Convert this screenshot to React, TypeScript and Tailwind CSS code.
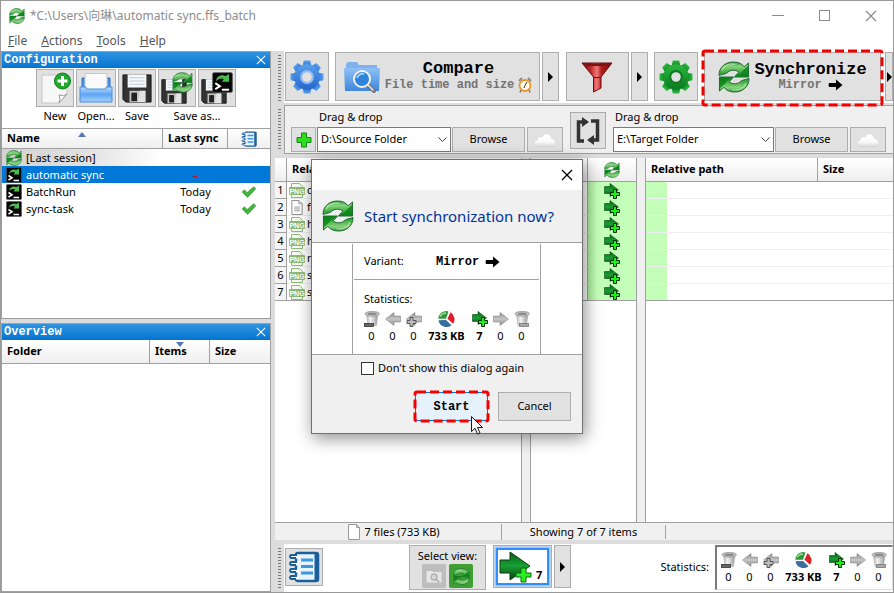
import { useState, type ReactNode } from 'react';
import clsx from 'clsx';

/* ---------- icons ---------- */

function Gradients() {
  return (
    <svg className="absolute size-0" aria-hidden="true">
      <defs>
        <linearGradient id="leaf" x1="0" y1="0" x2="0" y2="1">
          <stop offset="0" stopColor="#3c9c48" />
          <stop offset="0.3" stopColor="#86d37c" />
          <stop offset="1" stopColor="#0b8f1c" />
        </linearGradient>
        <linearGradient id="forest" x1="0" y1="0" x2="0" y2="1">
          <stop offset="0" stopColor="#0a5f16" />
          <stop offset="0.5" stopColor="#17a034" />
          <stop offset="1" stopColor="#063f0f" />
        </linearGradient>
        <linearGradient id="steel" x1="0" y1="0" x2="0" y2="1">
          <stop offset="0" stopColor="#8e8e8e" />
          <stop offset="0.5" stopColor="#c6c6c6" />
          <stop offset="1" stopColor="#8a8a8a" />
        </linearGradient>
        <linearGradient id="bin" x1="0" y1="0" x2="1" y2="0">
          <stop offset="0" stopColor="#b5b5b5" />
          <stop offset="0.35" stopColor="#f2f2f2" />
          <stop offset="1" stopColor="#9a9a9a" />
        </linearGradient>
        <linearGradient id="gearBlue" x1="0" y1="0" x2="0" y2="1">
          <stop offset="0" stopColor="#5aa0ee" />
          <stop offset="1" stopColor="#2467cc" />
        </linearGradient>
        <linearGradient id="gearGreen" x1="0" y1="0" x2="0" y2="1">
          <stop offset="0" stopColor="#2bb83e" />
          <stop offset="1" stopColor="#087a20" />
        </linearGradient>
        <linearGradient id="folder" x1="0" y1="0" x2="0" y2="1">
          <stop offset="0" stopColor="#8fc1f5" />
          <stop offset="1" stopColor="#3f86dd" />
        </linearGradient>
        <linearGradient id="tray" x1="0" y1="0" x2="0" y2="1">
          <stop offset="0" stopColor="#b9dcff" />
          <stop offset="0.5" stopColor="#5fa6f2" />
          <stop offset="1" stopColor="#a5d0fb" />
        </linearGradient>
        <linearGradient id="ruby" x1="0" y1="0" x2="1" y2="0">
          <stop offset="0" stopColor="#6a0b0b" />
          <stop offset="0.3" stopColor="#c22a2a" />
          <stop offset="0.5" stopColor="#f07878" />
          <stop offset="0.65" stopColor="#b01c1c" />
          <stop offset="1" stopColor="#7a0c0c" />
        </linearGradient>
        <linearGradient id="cloud" x1="0" y1="0" x2="0" y2="1">
          <stop offset="0" stopColor="#ffffff" />
          <stop offset="0.6" stopColor="#fafafa" />
          <stop offset="1" stopColor="#d8d8d8" />
        </linearGradient>
      </defs>
    </svg>
  );
}

const SWIRL =
  'M1 15C1 6 8 1 16 1C21 1 25 3 27 6L31.5 2V16.5H17L21.5 11.5C18 8.5 12 9 9 12.5C6.5 14 3 14 1 15Z';

function SyncIcon({ className }: { className?: string }) {
  return (
    <svg viewBox="0 0 33 33" className={className} aria-hidden="true">
      {[0, 180].map((deg) => (
        <g key={deg} transform={`rotate(${deg} 16.5 16.5)`}>
          <path d={SWIRL} fill="url(#leaf)" stroke="#1d6630" strokeWidth="1" />
          <path d="M18 16L31 16V5L26 9.500C24 12 22 14 18 16Z" fill="#078016" opacity="0.8" />
          <path d="M4 10C7 4 13 2.500 18 3.500" fill="none" stroke="#b6ecac" strokeWidth="1.500" opacity="0.7" />
        </g>
      ))}
    </svg>
  );
}

function BatchIcon({ className }: { className?: string }) {
  return (
    <svg viewBox="0 0 16 16" className={className} aria-hidden="true">
      <rect x="0.500" y="0.500" width="15" height="15" rx="1" fill="#050505" stroke="#555" strokeWidth="0.600" />
      <path d="M3 7C3.500 3 7 1.500 10.500 3L13 1.500V7.500H7.500L9 5.500C7 4.500 5 5 3 7Z" fill="#4cbb4e" />
      <path d="M2.500 8.500L6 10.800L2.500 13" fill="none" stroke="#fff" strokeWidth="1.500" />
      <path d="M7.500 13.500H13" stroke="#fff" strokeWidth="1.500" />
    </svg>
  );
}

function GearIcon({ fill, hole, className }: { fill: string; hole: string; className?: string }) {
  return (
    <svg viewBox="0 0 32 32" className={className} aria-hidden="true">
      <g fill={fill}>
        {[0, 45, 90, 135, 180, 225, 270, 315].map((deg) => (
          <path key={deg} d="M11.500 7L13 0.500H19L20.500 7Z" transform={`rotate(${deg} 16 16)`} />
        ))}
        <circle cx="16" cy="16" r="12" />
      </g>
      <circle cx="16" cy="16" r="5.500" fill="#e1e1e1" stroke={hole} strokeWidth="2" />
    </svg>
  );
}

function ArrowPlusIcon({ className }: { className?: string }) {
  return (
    <svg viewBox="0 0 16 16" className={className} aria-hidden="true">
      <path d="M0.500 3.500H6V0.500L14.500 7L6 13.500V10.500H0.500Z" fill="url(#forest)" stroke="#0a4a12" strokeWidth="0.600" />
      <path
        d="M9.500 6.500H12.500V9.500H15.500V12.500H12.500V15.500H9.500V12.500H6.500V9.500H9.500Z"
        fill="#1cf01c"
        stroke="#052b05"
      />
    </svg>
  );
}

function GrayArrowIcon({ left, plus, className }: { left?: boolean; plus?: boolean; className?: string }) {
  return (
    <svg viewBox="0 0 16 16" className={className} aria-hidden="true">
      <path
        d="M0.500 5H7V1.500L15.500 8L7 14.500V11H0.500Z"
        fill="url(#steel)"
        stroke="#8a8a8a"
        strokeWidth="0.600"
        transform={left ? 'rotate(180 8 8)' : undefined}
      />
      {plus && (
        <path d="M4 6.500H7V9.500H10V12.500H7V15.500H4V12.500H1V9.500H4Z" fill="#bdbdbd" stroke="#555" />
      )}
    </svg>
  );
}

function BinIcon({ right, className }: { right?: boolean; className?: string }) {
  return (
    <svg viewBox="0 0 16 16" className={className} aria-hidden="true">
      <path d="M2.500 3L4 14.500H12.500L14 3Z" fill="url(#bin)" stroke="#a8a8a8" strokeWidth="0.500" />
      <ellipse cx="8.200" cy="2.800" rx="7.200" ry="2.400" fill="#c9c9c9" stroke="#8a8a8a" strokeWidth="0.700" />
      <ellipse cx="8.200" cy="2.800" rx="4.800" ry="1.200" fill="#8b8b8b" />
      <rect x={right ? 5.5 : 0.5} y="12.500" width="9" height="3" fill={right ? '#a8a8a8' : '#666'} stroke={right ? '#777' : '#333'} strokeWidth="0.800" />
    </svg>
  );
}

function PieIcon({ className }: { className?: string }) {
  return (
    <svg viewBox="0 0 17 16" className={className} aria-hidden="true">
      <path d="M8 7.800L0.300 7.800A8 8 0 0 1 10.500 0.400Z" fill="#2f9a38" />
      <path d="M9.500 7.800L12.500 1.200A8 8 0 0 1 15 12.800Z" fill="#dd1f2a" />
      <path d="M8 9L0.500 9.200A8 8 0 0 0 13.500 14.200Z" fill="#3a6c9e" />
      <path d="M2 5.500Q4 2 8 2" stroke="#a6dba0" strokeWidth="1.500" fill="none" />
    </svg>
  );
}

function BlackArrowIcon({ className }: { className?: string }) {
  return (
    <svg viewBox="0 0 15 12" className={className} aria-hidden="true">
      <path d="M1 4H8V0.500L14.500 6L8 11.500V8H1Q0 6 1 4Z" fill="#000" />
    </svg>
  );
}

function NotebookIcon({ className }: { className?: string }) {
  return (
    <svg viewBox="0 0 32 32" className={className} aria-hidden="true">
      <rect x="8" y="2" width="22" height="28" rx="2" fill="#e9f3fb" stroke="#1b5f9e" strokeWidth="2.500" />
      <path d="M28.500 2V30" stroke="#1b5f9e" strokeWidth="4" />
      <path d="M13 9H25M13 15.500H25M13 22H25" stroke="#3d97dd" strokeWidth="3" />
      {[5, 12, 19, 26].map((y) => (
        <g key={y}>
          <rect x="2" y={y - 1.5} width="9" height="4" rx="2" fill="#fff" />
          <path d={`M9 ${y - 1}H3Q1 ${y + 0.5} 3 ${y + 2}H8`} fill="none" stroke="#1b5f9e" strokeWidth="2" />
        </g>
      ))}
    </svg>
  );
}

function FloppyIcon({ className }: { className?: string }) {
  return (
    <svg viewBox="0 0 32 32" className={className} aria-hidden="true">
      <path d="M1 2H31V31H4L1 28Z" fill="#333" stroke="#111" />
      <rect x="6" y="1.500" width="20" height="14" fill="#f4f8fb" />
      <path d="M8 5H24M8 8.500H24M8 12H24" stroke="#b8cbd8" />
      <rect x="8" y="19" width="17" height="12" fill="#c4c4c4" />
      <rect x="10" y="21" width="6" height="9" fill="#222" />
      <path d="M19 19H25V31H17Z" fill="#e3e3e3" />
    </svg>
  );
}

function NewFileIcon({ className }: { className?: string }) {
  return (
    <svg viewBox="0 0 32 32" className={className} aria-hidden="true">
      <path d="M3 3H28V22L20 31H3Z" fill="#f7f7f7" stroke="#c4c4c4" />
      <path d="M20 31Q22 26 20 23Q25 25 28 22Z" fill="#fff" stroke="#999" />
      <circle cx="23.500" cy="9" r="8" fill="#1fa82c" stroke="#11801c" />
      <path d="M23.500 4V14M18.500 9H28.500" stroke="#fff" strokeWidth="3" />
    </svg>
  );
}

function OpenIcon({ className }: { className?: string }) {
  return (
    <svg viewBox="0 0 34 32" className={className} aria-hidden="true">
      <path d="M3 6H31V18H3Z" fill="#4b94e6" stroke="#2f72c4" />
      <path d="M6 1.500H28V18H6Z" fill="#fafafa" stroke="#c9c9c9" />
      <path d="M1 15H7V17H27V15H33V30H1Z" fill="url(#tray)" stroke="#4c8fdc" />
    </svg>
  );
}

function FunnelIcon({ className }: { className?: string }) {
  return (
    <svg viewBox="0 0 32 32" className={className} aria-hidden="true">
      <path d="M1 2H31L20 16V27L12.500 31V16Z" fill="url(#ruby)" stroke="#6e0b0b" />
      <path d="M3 2.500H29L26 5H6Z" fill="#7d1212" />
      <path d="M12.500 16.500H20" stroke="#7a0d0d" />
    </svg>
  );
}

function FolderSearchIcon({ className }: { className?: string }) {
  return (
    <svg viewBox="0 0 38 32" className={className} aria-hidden="true">
      <path d="M3 5Q3 1 6 1H14L16 4H34V10H3Z" fill="#7db2ef" />
      <path d="M1 7H37L36 30H2Z" fill="url(#folder)" />
      <path d="M25 24L31 30" stroke="#777" strokeWidth="4" strokeLinecap="round" />
      <path d="M25 24L30.500 29.500" stroke="#e8e8e8" strokeWidth="1.500" />
      <circle cx="19" cy="18" r="8" fill="#2d84d8" stroke="#f2f2f2" strokeWidth="2" />
      <path d="M14 17Q16 12 21 13" stroke="#9fd0fa" strokeWidth="2" fill="none" />
    </svg>
  );
}

function ClockIcon({ className }: { className?: string }) {
  return (
    <svg viewBox="0 0 14 16" className={className} aria-hidden="true">
      <path d="M1 4L4 1M13 4L10 1" stroke="#8a8a8a" strokeWidth="2" />
      <path d="M3 13L2 15.500M11 13L12 15.500" stroke="#777" strokeWidth="1.500" />
      <circle cx="7" cy="8.500" r="5.500" fill="#fffbe6" stroke="#e9962c" strokeWidth="1.800" />
      <path d="M7 8.500L9 5M7 8.500L6 11" stroke="#333" fill="none" />
    </svg>
  );
}

function CloudIcon({ className }: { className?: string }) {
  return (
    <svg viewBox="0 0 24 16" className={className} aria-hidden="true">
      <path
        d="M5 15C0 15 0 9 4 8.500C4 5 7 4 9 5C11 0 18 1 18.500 6.500C23 6.500 24.500 14 19.500 15Z"
        fill="url(#cloud)"
        stroke="#d0d0d0"
        strokeWidth="0.500"
      />
    </svg>
  );
}

function SwapIcon({ className }: { className?: string }) {
  return (
    <svg viewBox="0 0 24 28" className={className} aria-hidden="true">
      <g fill="none" stroke="#333" strokeWidth="3.500">
        <path d="M8 24H2.500V5H8" />
        <path d="M15 4H21.500V23H17" />
      </g>
      <path d="M6 0L13 5L6 10ZM18 18V28L11 23Z" fill="#333" />
    </svg>
  );
}

function PlusIcon({ className }: { className?: string }) {
  return (
    <svg viewBox="0 0 16 16" className={className} aria-hidden="true">
      <path d="M5.500 1H10.500V5.500H15V10.500H10.500V15H5.500V10.500H1V5.500H5.500Z" fill="#2fdc1e" stroke="#128a14" />
    </svg>
  );
}

function CheckIcon() {
  return (
    <svg viewBox="0 0 16 13" className="mx-auto h-3 w-4" aria-hidden="true">
      <path d="M0.500 6.500L3 4L6 7L13 0.800L15.500 3L6.500 12.500Z" fill="#41b53b" stroke="#3b8f3a" strokeWidth="0.600" />
    </svg>
  );
}

function PngIcon() {
  return (
    <svg viewBox="0 0 16 15" className="h-[15px] w-4" aria-hidden="true">
      <path d="M2.500 0.500H10.500L13.500 3.500V14.500H2.500Z" fill="#f6faf3" stroke="#8dba78" />
      <rect x="0" y="4" width="16" height="8" rx="1" fill="#8dba78" />
      <text x="8" y="10.500" fontSize="7" fontWeight="700" fill="#fff" textAnchor="middle" fontFamily="Liberation Sans, sans-serif">
        PNG
      </text>
    </svg>
  );
}

function TextFileIcon() {
  return (
    <svg viewBox="0 0 16 16" className="h-[15px] w-4" aria-hidden="true">
      <path d="M2.500 0.500H10L13.500 4V15.500H2.500Z" fill="#fff" stroke="#888" />
      <path d="M10 0.500V4H13.500M5 7.500H11M5 9.500H11M5 11.500H11" fill="none" stroke="#999" />
    </svg>
  );
}

function CloseGlyph({ className }: { className?: string }) {
  return (
    <svg viewBox="0 0 12 12" className={className} aria-hidden="true">
      <path d="M1 1L11 11M11 1L1 11" fill="none" stroke="currentColor" strokeWidth="1.300" />
    </svg>
  );
}

function Dashes() {
  return (
    <svg className="pointer-events-none absolute inset-0 size-full overflow-visible" aria-hidden="true">
      <rect width="100%" height="100%" rx="2" fill="none" stroke="#f50000" strokeWidth="3" strokeDasharray="9 4" />
    </svg>
  );
}

/* ---------- small pieces ---------- */

const MONO = "font-['Liberation_Mono',monospace]";

function ToolButton({ label, className, children }: { label?: string; className?: string; children: ReactNode }) {
  return (
    <button
      type="button"
      aria-label={label}
      className={clsx('flex shrink-0 items-center justify-center border border-[#adadad] bg-[#e1e1e1]', className)}
    >
      {children}
    </button>
  );
}

function DropButton({ className }: { className: string }) {
  return (
    <ToolButton label="More" className={className}>
      <svg viewBox="0 0 5 10" className="h-2.5 w-[5px]" aria-hidden="true">
        <path d="M0 0L5 5L0 10Z" />
      </svg>
    </ToolButton>
  );
}

function Grip() {
  return (
    <div className="flex w-[13px] shrink-0 justify-end py-1 pr-[3px]">
      <div className="w-[3px] bg-[repeating-linear-gradient(#777_0_1px,transparent_1px_3px)]" />
    </div>
  );
}

function PanelTitle({ children }: { children: string }) {
  return (
    <div className="flex h-4 shrink-0 items-center justify-between bg-linear-to-b from-[#2f93e0] to-[#0074d1] pr-1 pl-0.5 text-white">
      <h2 className={clsx(MONO, 'text-xs leading-4 font-bold')}>{children}</h2>
      <button type="button" aria-label={`Close ${children}`}>
        <CloseGlyph className="size-2.5" />
      </button>
    </div>
  );
}

function Statistics() {
  const cells: { icon: ReactNode; value: string; bold?: boolean }[] = [
    { icon: <BinIcon className="size-4" />, value: '0' },
    { icon: <GrayArrowIcon left className="size-4" />, value: '0' },
    { icon: <GrayArrowIcon left plus className="size-4" />, value: '0' },
    { icon: <PieIcon className="h-4 w-[17px]" />, value: '733 KB', bold: true },
    { icon: <ArrowPlusIcon className="size-4" />, value: '7', bold: true },
    { icon: <GrayArrowIcon className="size-4" />, value: '0' },
    { icon: <BinIcon right className="size-4" />, value: '0' },
  ];
  return (
    <div className="grid grid-cols-[21px_21px_21px_45px_21px_21px_21px] justify-center">
      {cells.map((cell, i) => (
        <div key={i} className="flex flex-col items-center gap-px">
          {cell.icon}
          <span className={clsx('leading-4 whitespace-nowrap', cell.bold && 'font-bold')}>{cell.value}</span>
        </div>
      ))}
    </div>
  );
}

function FolderPicker({ id, path, className }: { id: string; path: string; className: string }) {
  return (
    <div className={clsx('flex flex-col gap-0.5', className)}>
      <label htmlFor={id} className="pl-0.5 leading-4">
        Drag &amp; drop
      </label>
      <div className="relative">
        <select
          id={id}
          defaultValue={path}
          className="block h-[25px] w-full appearance-none border border-[#7a7a7a] bg-white px-[3px] text-[11px]"
        >
          <option>{path}</option>
        </select>
        <svg viewBox="0 0 9 6" className="pointer-events-none absolute top-2.5 right-1 h-1.5 w-[9px]" aria-hidden="true">
          <path d="M0.500 0.500L4.500 4.500L8.500 0.500" fill="none" stroke="#444" />
        </svg>
      </div>
    </div>
  );
}

/* ---------- left column ---------- */

const SESSIONS = [
  { name: 'automatic sync', sync: '–', done: false },
  { name: 'BatchRun', sync: 'Today', done: true },
  { name: 'sync-task', sync: 'Today', done: true },
];

const HEAD = 'bg-linear-to-b from-white to-[#efefef] border-b border-[#a0a0a0] text-left font-bold';

function ConfigToolButton({ label, className, children }: { label: string; className: string; children: ReactNode }) {
  return (
    <ToolButton label={label} className={clsx('h-[38px]', className)}>
      {children}
    </ToolButton>
  );
}

function Configuration() {
  return (
    <section className="flex h-[268px] shrink-0 flex-col border border-[#a0a0a0] bg-white">
      <PanelTitle>Configuration</PanelTitle>
      <div className="flex h-[61px] shrink-0 justify-center gap-0.5 border-b border-[#a0a0a0] pt-px text-center leading-[18px]">
        <div>
          <ConfigToolButton label="New" className="w-[38px]">
            <NewFileIcon className="size-8" />
          </ConfigToolButton>
          New
        </div>
        <div>
          <ConfigToolButton label="Open" className="w-10">
            <OpenIcon className="h-8 w-[34px]" />
          </ConfigToolButton>
          Open...
        </div>
        <div>
          <ConfigToolButton label="Save" className="w-[38px]">
            <FloppyIcon className="size-[30px]" />
          </ConfigToolButton>
          Save
        </div>
        <div>
          <div className="flex gap-0.5">
            <ConfigToolButton label="Save as synchronization" className="relative w-[38px]">
              <FloppyIcon className="mt-1.5 mr-1.5 size-[26px]" />
              <SyncIcon className="absolute top-0.5 right-0.5 size-[21px]" />
            </ConfigToolButton>
            <ConfigToolButton label="Save as batch job" className="relative w-[38px]">
              <FloppyIcon className="mt-1.5 mr-1.5 size-[26px]" />
              <BatchIcon className="absolute top-0.5 right-0.5 size-[21px]" />
            </ConfigToolButton>
          </div>
          Save as...
        </div>
      </div>
      <table className="w-full table-fixed border-separate border-spacing-0">
        <colgroup>
          <col />
          <col className="w-[65px]" />
          <col className="w-[42px]" />
        </colgroup>
        <thead>
          <tr className="h-5">
            <th className={clsx(HEAD, 'relative border-r p-0 pl-[5px]')}>
              Name
              <span className="absolute top-[3px] left-1/2 -ml-1 size-0 border-x-4 border-b-[5px] border-x-transparent border-b-[#5277b8]" />
            </th>
            <th className={clsx(HEAD, 'border-r p-0 pl-[5px]')}>Last sync</th>
            <th aria-label="Log" className={clsx(HEAD, 'p-0')}>
              <NotebookIcon className="mx-auto size-4" />
            </th>
          </tr>
        </thead>
        <tbody>
          <tr className="h-[17px]">
            <td colSpan={3} className="bg-linear-to-r from-[#d2d2d2] via-[#e0e0e0] via-30% to-white to-60% p-0">
              <div className="flex items-center gap-1 pl-1 leading-4">
                <SyncIcon className="size-4" />
                [Last session]
              </div>
            </td>
          </tr>
          {SESSIONS.map((row, i) => (
            <tr key={row.name} className={clsx('h-[17px]', i === 0 && 'bg-[#0078d7] text-white')}>
              <td className="p-0">
                <div className="flex items-center gap-1 pl-1 leading-4">
                  <BatchIcon className="size-4" />
                  {row.name}
                </div>
              </td>
              <td className={clsx('p-0 text-center leading-4', !row.done && 'text-red-600')}>{row.sync}</td>
              <td className="p-0">{row.done && <CheckIcon />}</td>
            </tr>
          ))}
        </tbody>
      </table>
    </section>
  );
}

function Overview() {
  return (
    <section className="flex min-h-0 flex-1 flex-col border border-[#a0a0a0] bg-white">
      <PanelTitle>Overview</PanelTitle>
      <table className="w-full table-fixed border-separate border-spacing-0">
        <thead>
          <tr className="h-6">
            <th className={clsx(HEAD, 'border-r pl-[5px]')}>Folder</th>
            <th className={clsx(HEAD, 'relative w-[60px] border-r pl-[5px]')}>
              Items
              <span className="absolute top-0.5 left-1/2 -ml-1 size-0 border-x-4 border-t-[5px] border-x-transparent border-t-[#5277b8]" />
            </th>
            <th className={clsx(HEAD, 'w-[60px] pl-[5px]')}>Size</th>
          </tr>
        </thead>
      </table>
    </section>
  );
}

/* ---------- right column ---------- */

function MainToolbar() {
  return (
    <div className="flex h-[54px] shrink-0">
      <Grip />
      <div className="flex h-[52px] min-w-0 flex-1 justify-between bg-white pt-px pl-px">
        <div className="flex gap-1.5">
          <ToolButton label="Comparison settings" className="h-[49px] w-11">
            <GearIcon fill="url(#gearBlue)" hole="#8fbdf0" className="size-[34px]" />
          </ToolButton>
          <div className="flex gap-0.5">
            <ToolButton className="h-[49px] w-[205px] gap-1">
              <FolderSearchIcon className="h-8 w-[38px]" />
              <span className="flex flex-col items-center">
                <span className={clsx(MONO, 'text-[17px] leading-[17px] font-bold')}>Compare</span>
                <span className={clsx(MONO, 'flex items-center gap-1 text-xs leading-4 font-bold whitespace-nowrap text-[#737373]')}>
                  File time and size
                  <ClockIcon className="h-4 w-3.5" />
                </span>
              </span>
            </ToolButton>
            <DropButton className="h-[49px] w-[17px]" />
          </div>
        </div>
        <div className="flex gap-0.5">
          <ToolButton label="Filter" className="h-[49px] w-[63px]">
            <FunnelIcon className="size-8" />
          </ToolButton>
          <DropButton className="h-[49px] w-[17px]" />
        </div>
        <div className="flex gap-1.5">
          <ToolButton label="Synchronization settings" className="h-[49px] w-11">
            <GearIcon fill="url(#gearGreen)" hole="#0f7a22" className="size-[34px]" />
          </ToolButton>
          <div className="flex gap-1">
            <div className="relative">
              <ToolButton className="h-[49px] w-[177px] gap-1">
                <SyncIcon className="size-8" />
                <span className="flex flex-col items-center">
                  <span className={clsx(MONO, 'text-[17px] leading-[17px] font-bold')}>Synchronize</span>
                  <span className={clsx(MONO, 'flex items-center gap-1.5 text-xs leading-[14px] font-bold text-[#737373]')}>
                    Mirror
                    <BlackArrowIcon className="h-3 w-[15px]" />
                  </span>
                </span>
              </ToolButton>
              <div className="pointer-events-none absolute -inset-x-px -top-px -bottom-0.5">
                <Dashes />
              </div>
            </div>
            <DropButton className="h-[49px] w-2" />
          </div>
        </div>
      </div>
    </div>
  );
}

function FolderBar() {
  return (
    <div className="flex h-[49px] shrink-0">
      <Grip />
      <div className="flex min-w-0 flex-1 items-end border border-r-0 border-[#a0a0a0] bg-[#f0f0f0] pr-[7px] pb-px pl-1.5">
        <ToolButton label="Add folder pair" className="size-[25px]">
          <PlusIcon className="size-4" />
        </ToolButton>
        <FolderPicker id="source" path="D:\Source Folder" className="ml-px w-[134px]" />
        <ToolButton className="ml-px h-[25px] w-[73px]">Browse</ToolButton>
        <ToolButton label="Source cloud storage" className="ml-0.5 h-[25px] w-9">
          <CloudIcon className="h-4 w-6" />
        </ToolButton>
        <ToolButton label="Swap sides" className="mx-[7px] mb-[3px] h-[37px] w-9">
          <SwapIcon className="h-7 w-6" />
        </ToolButton>
        <FolderPicker id="target" path="E:\Target Folder" className="min-w-0 flex-1" />
        <ToolButton className="ml-px h-[25px] w-[73px]">Browse</ToolButton>
        <ToolButton label="Target cloud storage" className="ml-0.5 h-[25px] w-9">
          <CloudIcon className="h-4 w-6" />
        </ToolButton>
      </div>
    </div>
  );
}

const FILES = ['c', 'f', 'h', 'h', 'n', 's', 's'];

function Grids() {
  return (
    <div className="ml-1 flex min-h-0 flex-1 bg-[#f0f0f0]">
      <div className="w-[247px] shrink-0 border-r border-[#a0a0a0] bg-white">
        <table className="w-full table-fixed border-separate border-spacing-0">
          <thead>
            <tr className="h-6">
              <th aria-label="Row" className={clsx(HEAD, 'w-3 border-r')} />
              <th className={clsx(HEAD, 'pl-[5px]')}>Relative path</th>
            </tr>
          </thead>
          <tbody>
            {FILES.map((name, i) => (
              <tr key={i} className="h-[17px] leading-4">
                <td className="border-r border-b border-[#a0a0a0] bg-[#f4f4f4] p-0 text-center">{i + 1}</td>
                <td className={clsx('border-b p-0', i === FILES.length - 1 ? 'border-[#a0a0a0]' : 'border-[#eee]')}>
                  <div className="flex h-4 items-center gap-0.5 pl-0.5">
                    {i === 1 ? <TextFileIcon /> : <PngIcon />}
                    {name}
                  </div>
                </td>
              </tr>
            ))}
          </tbody>
        </table>
      </div>
      <div className="ml-2 w-[107px] shrink-0 border-x border-[#a0a0a0] bg-white">
        <table className="w-full table-fixed border-separate border-spacing-0">
          <thead>
            <tr className="h-6">
              <th aria-label="Category" className={clsx(HEAD, 'border-r')} />
              <th aria-label="Action" className={clsx(HEAD, 'w-12 p-0')}>
                <SyncIcon className="mx-auto size-4" />
              </th>
            </tr>
          </thead>
          <tbody>
            {FILES.map((_, i) => {
              const line = i === FILES.length - 1 ? 'border-b-[#a0a0a0]' : 'border-b-[#eee]';
              return (
                <tr key={i} className="h-[17px]">
                  <td className={clsx('border-r border-b border-r-[#a0a0a0] p-0', line)} />
                  <td
                    className={clsx(
                      'bg-linear-to-r from-[#b0f0a4] to-[#c4ffb9] to-20% p-0',
                      i === FILES.length - 1 && 'border-b border-b-[#a0a0a0]',
                    )}
                  >
                    <ArrowPlusIcon className="mx-auto size-4" />
                  </td>
                </tr>
              );
            })}
          </tbody>
        </table>
      </div>
      <div className="ml-2 min-w-0 flex-1 border-l border-[#a0a0a0] bg-white">
        <table className="w-full table-fixed border-separate border-spacing-0">
          <thead>
            <tr className="h-6">
              <th className={clsx(HEAD, 'border-r pl-[5px]')}>Relative path</th>
              <th className={clsx(HEAD, 'w-[75px] pl-[5px]')}>Size</th>
            </tr>
          </thead>
          <tbody>
            {FILES.map((_, i) => (
              <tr key={i} className="h-[17px]">
                <td
                  colSpan={2}
                  className={clsx('border-b p-0', i === FILES.length - 1 ? 'border-[#a0a0a0]' : 'border-[#eee]')}
                >
                  <div className="h-4 w-[21px] bg-[#c4ffb9]" />
                </td>
              </tr>
            ))}
          </tbody>
        </table>
      </div>
    </div>
  );
}

function StatusBar() {
  return (
    <div className="ml-1 flex h-[18px] shrink-0 items-center border-t border-[#a0a0a0] bg-[#f0f0f0]">
      <div className="flex w-[227px] items-center justify-center gap-1 border-r border-[#a0a0a0] pl-3 leading-[14px]">
        <svg viewBox="0 0 12 16" className="h-4 w-3" aria-hidden="true">
          <path d="M0.500 0.500H8.500L11.500 3.500V15.500H0.500Z" fill="#fff" stroke="#999" />
          <path d="M8.500 0.500V3.500H11.500" fill="none" stroke="#999" />
        </svg>
        7 files (733 KB)
      </div>
      <div className="w-[164px] border-r border-[#a0a0a0] text-center leading-[14px]">Showing 7 of 7 items</div>
    </div>
  );
}

function BottomBar() {
  return (
    <div className="mt-1 flex h-12 shrink-0">
      <Grip />
      <div className="flex min-w-0 flex-1 items-start bg-white pt-px pl-px">
        <ToolButton label="Log" className="mt-[3px] size-[38px]">
          <NotebookIcon className="size-8" />
        </ToolButton>
        <div className="ml-[86px] flex h-[45px] w-[77px] shrink-0 flex-col items-center border border-[#adadad] bg-[#e1e1e1] pt-0.5">
          <span className="leading-4">Select view:</span>
          <div className="flex gap-[3px]">
            <button type="button" aria-label="Category view" className="flex size-6 items-center justify-center rounded-xs bg-[#bdbdbd]">
              <svg viewBox="0 0 16 13" className="h-[13px] w-4" aria-hidden="true">
                <path d="M0.500 1H6L7 2H15.500V12.500H0.500Z" fill="#e6e6e6" />
                <circle cx="8" cy="7" r="3" fill="#d6d6d6" stroke="#b0b0b0" strokeWidth="1.300" />
                <path d="M10 9L13 12" stroke="#a8a8a8" strokeWidth="1.500" />
              </svg>
            </button>
            <button type="button" aria-label="Action view" className="flex size-6 items-center justify-center rounded-xs bg-[#3f9f34]">
              <SyncIcon className="size-[17px]" />
            </button>
          </div>
        </div>
        <ToolButton label="Show files to create, 7" className="ml-[7px] h-[43px] w-[59px]">
          <span className="flex h-[37px] w-[53px] items-end border-2 border-[#2f8fff] bg-white shadow-[0_0_2px_1px_#7bb8ff]">
            <svg viewBox="0 0 34 32" className="h-8 w-[34px]" aria-hidden="true">
              <path d="M2 9H12V1L32 15L12 29V22H2Z" fill="url(#forest)" stroke="#0a3f12" />
              <path d="M23 17H28V22H33V26H28V31H23V26H18V22H23Z" fill="#28f022" stroke="#0b6b10" />
            </svg>
            <span className="pl-1 text-[11px] leading-4 font-bold">7</span>
          </span>
        </ToolButton>
        <DropButton className="ml-0.5 h-[43px] w-[17px]" />
        <div className="ml-auto flex items-center gap-1.5">
          Statistics:
          <div className="h-[45px] w-[178px] border-2 border-r border-b border-[#7a7a7a] border-r-[#ddd] border-b-[#ddd] pt-[5px] pr-0.5">
            <Statistics />
          </div>
        </div>
      </div>
    </div>
  );
}

/* ---------- dialog ---------- */

function SyncDialog({ onClose }: { onClose: () => void }) {
  const [skip, setSkip] = useState(false);

  return (
    <div className="absolute inset-0 flex items-center justify-center">
      <div
        role="dialog"
        aria-labelledby="sync-title"
        className="flex w-[272px] flex-col border border-[#707070] bg-[#f0f0f0] shadow-[2px_4px_16px_rgba(0,0,0,0.45)]"
      >
        <div className="flex h-[30px] items-center justify-end bg-white pr-[9px]">
          <button type="button" aria-label="Close" onClick={onClose}>
            <CloseGlyph className="size-3" />
          </button>
        </div>
        <div className="flex h-[53px] items-center gap-2.5 border-b border-[#a0a0a0] pl-2.5">
          <SyncIcon className="size-8" />
          <h1 id="sync-title" className="text-[15px] text-[#003399]">
            Start synchronization now?
          </h1>
        </div>
        <div className="border-b border-[#a0a0a0] bg-white pt-px pr-[41px] pl-10">
          <div className="h-[110px] border-x border-[#a0a0a0]">
            <div className="mx-px flex h-9 items-center border-b border-[#a0a0a0] pl-2.5">
              <span className="w-[72px]">Variant:</span>
              <span className={clsx(MONO, 'mr-1.5 text-xs font-bold')}>Mirror</span>
              <BlackArrowIcon className="h-3 w-[15px]" />
            </div>
            <div className="flex flex-col gap-1 pt-[11px]">
              <span className="pl-[11px] leading-4">Statistics:</span>
              <Statistics />
            </div>
          </div>
        </div>
        <label className="mt-[5px] ml-[49px] flex items-center gap-1 self-start leading-4">
          <input
            type="checkbox"
            checked={skip}
            onChange={(e) => setSkip(e.target.checked)}
            className="size-[13px] appearance-none border border-[#333] bg-white checked:bg-[#0078d7]"
          />
          Don't show this dialog again
        </label>
        <div className="mt-4 mr-[11px] mb-3 flex justify-end gap-2.5">
          <div className="relative">
            <button
              type="button"
              onClick={onClose}
              className={clsx(MONO, 'block h-[29px] w-[73px] border border-[#0078d7] bg-[#e5f1fb] text-xs font-bold')}
            >
              Start
            </button>
            <Dashes />
            <svg viewBox="0 0 12 19" className="absolute top-6 left-14 h-[19px] w-3" aria-hidden="true">
              <path
                d="M0.500 0.500V15.500L4 12.300L6.500 18L9 17L6.500 11.500H11.500Z"
                fill="#fff"
                stroke="#000"
                strokeWidth="0.900"
              />
            </svg>
          </div>
          <button type="button" onClick={onClose} className="h-[29px] w-[73px] border border-[#adadad] bg-[#e1e1e1]">
            Cancel
          </button>
        </div>
      </div>
    </div>
  );
}

export default function App() {
  const [asking, setAsking] = useState(true);

  return (
    <div className="relative flex h-screen flex-col overflow-hidden border border-[#999] bg-white font-['Noto_Sans','Noto_Sans_CJK_SC',sans-serif] text-[11px] text-black">
      <Gradients />
      <header className="flex h-[29px] shrink-0 items-center gap-[5px] pl-2 text-[#8c8c8c]">
        <SyncIcon className="size-4" />
        <span className="text-xs">*C:\Users\向琳\automatic sync.ffs_batch</span>
        <div className="ml-auto flex items-center gap-[35px] pr-4">
          <button type="button" aria-label="Minimize" className="h-px w-3 bg-[#8c8c8c]" />
          <button type="button" aria-label="Maximize" className="size-[11px] border border-[#8c8c8c]" />
          <button type="button" aria-label="Close window">
            <CloseGlyph className="size-3" />
          </button>
        </div>
      </header>
      <nav className="flex h-[21px] shrink-0 items-center gap-3.5 pl-[7px] text-xs text-[#555]">
        {['File', 'Actions', 'Tools', 'Help'].map((item) => (
          <button type="button" key={item}>
            <span className="underline">{item[0]}</span>
            {item.slice(1)}
          </button>
        ))}
      </nav>
      <main className="flex min-h-0 flex-1 bg-[#dcdcdc]">
        <div className="flex w-[270px] shrink-0 flex-col gap-1">
          <Configuration />
          <Overview />
        </div>
        <div className="flex min-w-0 flex-1 flex-col">
          <MainToolbar />
          <FolderBar />
          <div className="h-1 shrink-0" />
          <Grids />
          <StatusBar />
          <BottomBar />
        </div>
      </main>
      {asking && <SyncDialog onClose={() => setAsking(false)} />}
    </div>
  );
}
